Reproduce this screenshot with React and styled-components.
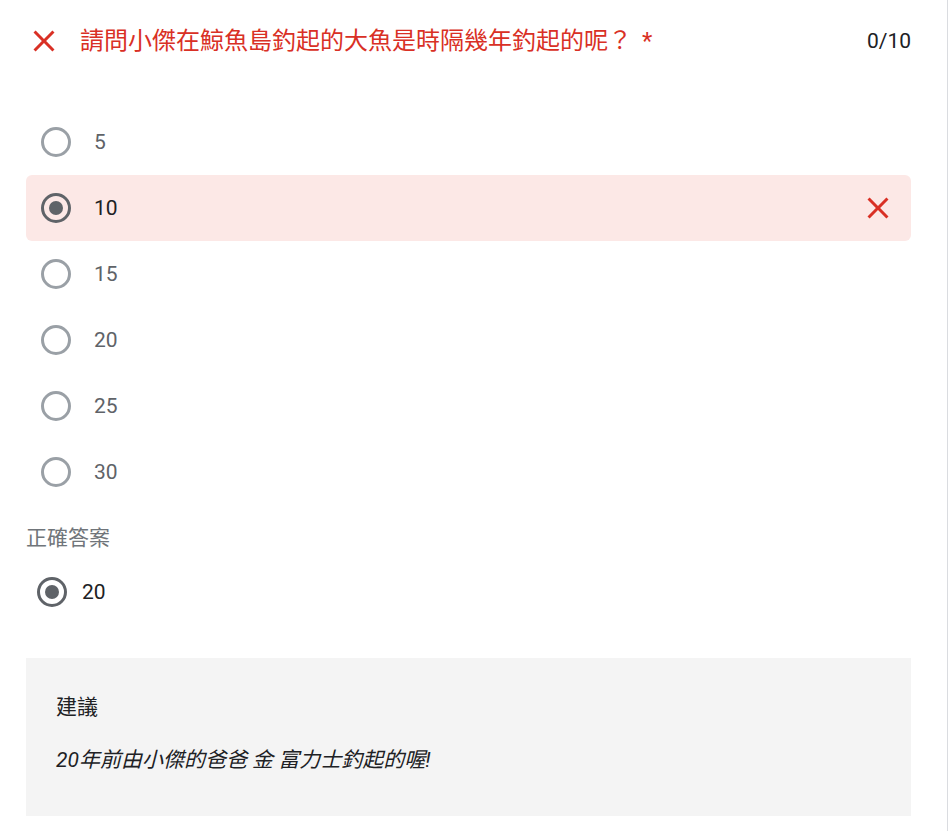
import React from 'react'
import styled, { createGlobalStyle } from 'styled-components'

const GlobalStyle = createGlobalStyle`
  html, body {
    margin: 0;
    padding: 0;
    background: #fff;
  }
  body {
    font-family: Roboto, "Noto Sans CJK TC", "Noto Sans", sans-serif;
    color: #202124;
  }
`

const Card = styled.div`
  width: 948px;
  min-height: 831px;
  box-sizing: border-box;
  border-right: 1px solid #dadce0;
  padding: 23px 36px 14px 26px;
`

const Header = styled.div`
  display: flex;
  align-items: center;
  height: 36px;
`

const Title = styled.div`
  flex: 1;
  margin-left: 18px;
  font-size: 24px;
  line-height: 36px;
  color: #d93025;
`

const Required = styled.span`
  padding-left: 10px;
  font-family: Roboto, sans-serif;
`

const Points = styled.div`
  font-size: 21px;
  line-height: 36px;
  color: #202124;
`

const OptionList = styled.div`
  display: flex;
  flex-direction: column;
  margin-top: 50px;
`

const OptionRow = styled.div`
  display: flex;
  align-items: center;
  height: 66px;
  padding-left: ${(p) => p.$inset}px;
  padding-right: 15px;
  border-radius: 6px;
  background: ${(p) => (p.$wrong ? '#fce8e6' : 'transparent')};
`

const Radio = styled.span`
  flex: none;
  width: 30px;
  height: 30px;
  box-sizing: border-box;
  border-radius: 50%;
  border: 3px solid ${(p) => (p.$checked ? '#5f6368' : '#9aa0a6')};
  display: flex;
  align-items: center;
  justify-content: center;

  &::after {
    content: '';
    display: ${(p) => (p.$checked ? 'block' : 'none')};
    width: 14px;
    height: 14px;
    border-radius: 50%;
    background: #5f6368;
  }
`

const OptionLabel = styled.span`
  flex: 1;
  margin-left: ${(p) => p.$gap}px;
  font-size: 21px;
  line-height: 30px;
  color: ${(p) => (p.$dark ? '#202124' : '#5f6368')};
`

const SectionLabel = styled.div`
  margin-top: 18px;
  font-size: 21px;
  line-height: 30px;
  color: #70757a;
`

const AnswerRow = styled(OptionRow)`
  height: 48px;
  margin-top: 15px;
`

const Feedback = styled.div`
  margin-top: 42px;
  background: #f4f4f4;
  padding: 34px 30px 41px;
  display: flex;
  flex-direction: column;
  gap: 23px;
`

const FeedbackTitle = styled.div`
  font-size: 21px;
  line-height: 30px;
  color: #202124;
`

const FeedbackText = styled.div`
  font-size: 21px;
  line-height: 30px;
  font-style: italic;
  color: #202124;
`

const CloseIcon = () => (
  <svg width="36" height="36" viewBox="0 0 24 24" fill="#d93025">
    <path d="M19 6.41L17.59 5 12 10.59 6.41 5 5 6.41 10.59 12 5 17.59 6.41 19 12 13.41 17.59 19 19 17.59 13.41 12z" />
  </svg>
)

const options = ['5', '10', '15', '20', '25', '30']
const picked = '10'

const App = () => {
  return (
    <>
      <GlobalStyle />
      <Card>
        <Header>
          <CloseIcon />
          <Title>
            請問小傑在鯨魚島釣起的大魚是時隔幾年釣起的呢？
            <Required>*</Required>
          </Title>
          <Points>0/10</Points>
        </Header>

        <OptionList>
          {options.map((opt) => {
            const isPicked = opt === picked
            return (
              <OptionRow key={opt} $inset={15} $wrong={isPicked}>
                <Radio $checked={isPicked} />
                <OptionLabel $gap={23} $dark={isPicked}>{opt}</OptionLabel>
                {isPicked && <CloseIcon />}
              </OptionRow>
            )
          })}
        </OptionList>

        <SectionLabel>正確答案</SectionLabel>
        <AnswerRow $inset={11}>
          <Radio $checked />
          <OptionLabel $gap={15} $dark>20</OptionLabel>
        </AnswerRow>

        <Feedback>
          <FeedbackTitle>建議</FeedbackTitle>
          <FeedbackText>20年前由小傑的爸爸 金 富力士釣起的喔!</FeedbackText>
        </Feedback>
      </Card>
    </>
  )
}

export default App
